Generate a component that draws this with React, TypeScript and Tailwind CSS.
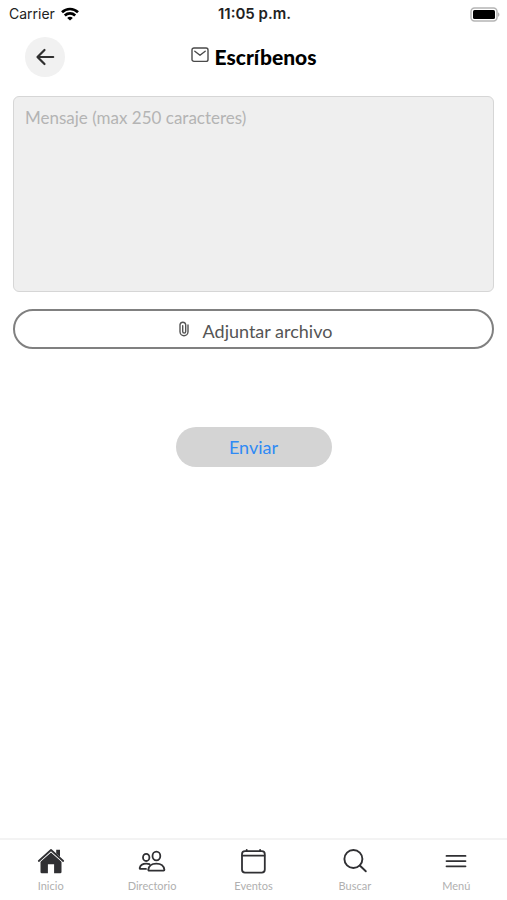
import type { ReactNode } from "react";

function WifiIcon() {
    return (
        <svg width="18" height="14" viewBox="0 0 18 14" fill="none" stroke="#000" strokeWidth="2.7" aria-hidden="true">
            <path d="M1 5.2C5.6.9 12.4.9 17 5.2" />
            <path d="M3.8 8.4c3-2.8 7.4-2.8 10.4 0" />
            <path d="M9 13.6 6.2 10.9c1.6-1.4 4-1.4 5.6 0Z" fill="#000" stroke="none" />
        </svg>
    );
}

function BatteryIcon() {
    return (
        <svg width="30" height="15" viewBox="0 0 30 15" aria-hidden="true">
            <rect x="1" y="1" width="26" height="13" rx="3.5" fill="#fff" stroke="#b5b5b5" strokeWidth="1.5" />
            <rect x="3" y="3" width="22" height="9" rx="1.5" fill="#000" />
            <path d="M28.2 5.2c1.6.7 1.6 3.9 0 4.6Z" fill="#a3a3a3" />
        </svg>
    );
}

function BackIcon() {
    return (
        <svg width="20" height="20" viewBox="0 0 20 20" fill="none" stroke="#303030" strokeWidth="2.2" strokeLinecap="round" strokeLinejoin="round" aria-hidden="true">
            <path d="M9.5 3 2.5 10l7 7M3 10h15.2" />
        </svg>
    );
}

function MailIcon() {
    return (
        <svg width="18" height="16" viewBox="0 0 18 16" fill="none" stroke="#4a4a4a" strokeWidth="1.4" strokeLinecap="round" strokeLinejoin="round" aria-hidden="true">
            <rect x="1" y="1" width="16" height="13.4" rx="2" />
            <path d="m3.8 4.3 5.2 4 5.2-4" />
        </svg>
    );
}

function ClipIcon() {
    return (
        <svg width="10" height="16" viewBox="0 0 10 16" fill="none" stroke="#555" strokeWidth="1.4" strokeLinecap="round" aria-hidden="true">
            <path d="M9 4v6.8a4 4 0 0 1-8 0V3.6a2.9 2.9 0 0 1 5.7 0v7a1.5 1.5 0 0 1-3 0V4.6" />
        </svg>
    );
}

function HomeIcon() {
    return (
        <svg width="28" height="28" viewBox="0 0 28 28" fill="#303033" aria-hidden="true">
            <path d="M14 5.5 3.5 14.8V25a1.3 1.3 0 0 0 1.3 1.3h6.1v-9h6.2v9h6.1a1.3 1.3 0 0 0 1.3-1.3V14.8Z" />
            <path d="M1.8 14 14 3l12.2 11" fill="none" stroke="#fff" strokeWidth="3" />
            <path d="M19.2 2.8H23v7l-3.8-3.4Z" />
            <path d="M1.8 14 14 3l12.2 11" fill="none" stroke="#303033" strokeWidth="1.8" strokeLinecap="round" strokeLinejoin="round" />
        </svg>
    );
}

function PeopleIcon() {
    return (
        <svg width="28" height="28" viewBox="0 0 28 28" fill="none" stroke="#303033" strokeWidth="1.8" strokeLinecap="round" strokeLinejoin="round" aria-hidden="true">
            <ellipse cx="18.4" cy="9" rx="3.9" ry="4.3" />
            <path d="M10.3 22.8c.5-4 3.8-6.2 8-6.2s7.6 2.2 8.100 6.2c0 .5-.3.900-.8.900H11.100c-.5 0-.9-.4-.8-.9Z" />
            <ellipse cx="8.2" cy="10.4" rx="3.2" ry="3.6" />
            <path d="M11.400 17.200c-1-.4-2-.6-3.100-.6-3.400 0-6 1.600-6.600 4.400-.1.500.2.900.7.900H8" />
        </svg>
    );
}

function CalendarIcon() {
    return (
        <svg width="28" height="28" viewBox="0 0 28 28" fill="none" stroke="#303033" strokeWidth="1.8" strokeLinecap="round" aria-hidden="true">
            <rect x="3" y="4.2" width="22.8" height="21.4" rx="3" />
            <path d="M3.4 8.7h22M7.7 2.8v1.4M21.1 2.8v1.4" />
        </svg>
    );
}

function SearchIcon() {
    return (
        <svg width="28" height="28" viewBox="0 0 28 28" fill="none" stroke="#303033" strokeWidth="1.9" strokeLinecap="round" aria-hidden="true">
            <circle cx="12.4" cy="12" r="9" />
            <path d="m18.8 18.5 6 5.8" />
        </svg>
    );
}

function MenuIcon() {
    return (
        <svg width="28" height="28" viewBox="0 0 28 28" fill="none" stroke="#303033" strokeWidth="1.8" strokeLinecap="round" aria-hidden="true">
            <path d="M4.5 8.9h19M4.5 14.1h19M4.5 19.3h19" />
        </svg>
    );
}

const tabs: { label: string; icon: ReactNode }[] = [
    { label: "Inicio", icon: <HomeIcon /> },
    { label: "Directorio", icon: <PeopleIcon /> },
    { label: "Eventos", icon: <CalendarIcon /> },
    { label: "Buscar", icon: <SearchIcon /> },
    { label: "Menú", icon: <MenuIcon /> },
];

function StatusBar() {
    return (
        <div className="grid h-7 grid-cols-3 items-center pr-[7px] pl-[9px] font-['Inter',sans-serif] text-sm text-[#222]">
            <div className="flex items-center gap-[6px]">
                <span>Carrier</span>
                <WifiIcon />
            </div>
            <span className="text-center text-[15px] font-semibold">11:05 p.m.</span>
            <div className="flex justify-end">
                <BatteryIcon />
            </div>
        </div>
    );
}

function Header() {
    return (
        <header className="grid grid-cols-[40px_1fr_40px] items-center px-[25px] pt-[9px]">
            <button type="button" aria-label="Volver" className="flex size-10 items-center justify-center rounded-full bg-[#f1f1f1]">
                <BackIcon />
            </button>
            <h1 className="flex items-center justify-center gap-[6px] text-[21px] font-black text-black">
                <span className="pb-1">
                    <MailIcon />
                </span>
                Escríbenos
            </h1>
        </header>
    );
}

export default function App() {
    return (
        <div className="flex min-h-screen flex-col bg-white font-['Lato',sans-serif]">
            <StatusBar />
            <Header />
            <main className="flex-1 px-[13px] pt-[19px]">
                <form className="flex flex-col items-center">
                    <textarea
                        aria-label="Mensaje"
                        maxLength={250}
                        placeholder="Mensaje (max 250 caracteres)"
                        className="block h-[196px] w-full resize-none rounded-md border border-[#d6d6d6] bg-[#efefef] px-[11px] py-[9px] text-[17px] leading-6 text-[#444] outline-none placeholder:text-[#b4b4b4]"
                    />
                    <button type="button" className="mt-[17px] flex h-10 w-full items-center justify-center gap-[14px] rounded-full border-2 border-[#808080] pt-1 pl-1 text-lg text-[#555]">
                        <span className="pb-1">
                            <ClipIcon />
                        </span>
                        Adjuntar archivo
                    </button>
                    <button type="submit" className="mt-[78px] h-10 w-[156px] rounded-full bg-[#d4d4d4] text-lg text-[#2f8af5]">
                        Enviar
                    </button>
                </form>
            </main>
            <nav className="grid grid-cols-5 border-t-2 border-[#f3f3f3] pt-[7px] pb-[7px]">
                {tabs.map((tab) => (
                    <a key={tab.label} href="#" className="flex flex-col items-center gap-[3px] text-[11px] leading-[15px] text-[#b0b0b0]">
                        {tab.icon}
                        {tab.label}
                    </a>
                ))}
            </nav>
        </div>
    );
}
